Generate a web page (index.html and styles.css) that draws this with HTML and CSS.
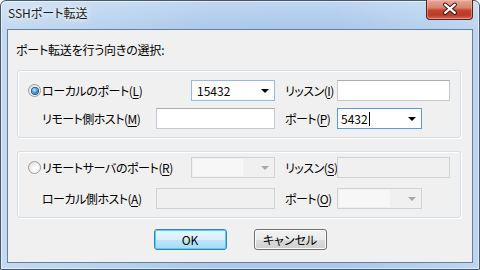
FILE: index.html
```html
<!DOCTYPE html>
<html lang="ja">
<head>
    <meta charset="UTF-8">
    <title>SSHポート転送</title>
    <link rel="stylesheet" href="styles.css">
</head>
<body>
    <div class="window">
        <div class="titlebar">
            <span class="title">SSHポート転送</span>
            <div class="close">
                <svg width="47" height="20" viewBox="0 0 47 20">
                    <path d="M19.5 5.5 L29.5 14 M29.5 5.5 L19.5 14" stroke="#3b1710" stroke-width="4.2" stroke-linecap="round" fill="none"/>
                    <path d="M19.5 5.5 L29.5 14 M29.5 5.5 L19.5 14" stroke="#ffffff" stroke-width="2.2" stroke-linecap="round" fill="none"/>
                </svg>
            </div>
        </div>

        <div class="client">
            <p class="prompt">ポート転送を行う向きの選択:</p>

            <!-- ローカル → リモート -->
            <div class="group group-local">
                <label class="choice">
                    <span class="radio checked"><span class="dot"></span></span>
                    ローカルのポート(<u>L</u>)
                </label>
                <div class="field combo c-combo1"><span class="value">15432</span><span class="arrow"></span></div>
                <span class="lbl c-lbl2">リッスン(<u>I</u>)</span>
                <div class="field edit c-edit2"></div>

                <span class="lbl c-lbl1">リモート側ホスト(<u>M</u>)</span>
                <div class="field edit c-edit1"></div>
                <span class="lbl c-lbl2">ポート(<u>P</u>)</span>
                <div class="field combo focus c-combo2"><span class="value">5432<span class="caret"></span></span><span class="arrow"></span></div>
            </div>

            <!-- リモート → ローカル -->
            <div class="group group-remote">
                <label class="choice">
                    <span class="radio"></span>
                    リモートサーバのポート(<u>R</u>)
                </label>
                <div class="field combo disabled c-combo1"><span class="value"></span><span class="arrow"></span></div>
                <span class="lbl c-lbl2">リッスン(<u>S</u>)</span>
                <div class="field edit disabled c-edit2"></div>

                <span class="lbl c-lbl1">ローカル側ホスト(<u>A</u>)</span>
                <div class="field edit disabled c-edit1"></div>
                <span class="lbl c-lbl2">ポート(<u>O</u>)</span>
                <div class="field combo disabled c-combo2"><span class="value"></span><span class="arrow"></span></div>
            </div>

            <div class="buttons">
                <button class="btn default">OK</button>
                <button class="btn">キャンセル</button>
            </div>
        </div>
    </div>
</body>
</html>
```

FILE: styles.css
```css
/* fenêtre type Windows 7 */
body {
    margin: 0;
    background: #ffffff;
    font-family: "Noto Sans CJK JP", sans-serif;
    font-size: 12px;
    font-feature-settings: "palt";
    color: #000;
}

.window {
    box-sizing: border-box;
    width: 480px;
    height: 270px;
    border: 1px solid #46596e;
    border-radius: 6px 6px 0 0;
    padding: 0 6px 6px;
    display: flex;
    flex-direction: column;
    background:
        linear-gradient(to bottom, rgba(255, 255, 255, 0.25), rgba(255, 255, 255, 0) 28px),
        linear-gradient(to right, #c4daf1, #abc9eb 45%, #a9c8eb 70%, #bdd5f0);
    box-shadow: inset 0 0 0 1px rgba(255, 255, 255, 0.55);
}

.titlebar {
    height: 28px;
    display: flex;
    align-items: flex-start;
}

.title {
    margin: 4px 0 0 1px;
    line-height: 16px;
    color: #1b1b1b;
    text-shadow: 0 0 5px #ffffff, 0 0 8px rgba(255, 255, 255, 0.8);
}

.close {
    margin: -1px 0 0 auto;
    width: 47px;
    height: 20px;
    box-sizing: border-box;
    border: 1px solid #5a2219;
    border-top: none;
    border-radius: 0 0 4px 4px;
    background: linear-gradient(to bottom, #e9a898 0%, #d78470 40%, #c4432e 55%, #b93b26 80%, #d2705c 100%);
    box-shadow: inset 0 0 0 1px rgba(255, 200, 190, 0.45);
    display: flex;
    justify-content: center;
    align-items: center;
}

.close svg {
    display: block;
    margin: -1px 0 0 -1px;
}

/* zone client */
.client {
    flex: 1;
    border: 1px solid #67809e;
    background-color: #f0f0f0;
}

.prompt {
    margin: 12px 0 0 8px;
    line-height: 16px;
    letter-spacing: -0.2px;
}

.group {
    margin: 12px 11px 0 9px;
    border: 1px solid #d5dfe5;
    border-radius: 3px;
    box-shadow: inset 1px 1px 0 #ffffff, 1px 1px 0 #ffffff;
    padding: 9px 0 8px 10px;
    display: grid;
    grid-template-columns: 14px 114px 35px 84px 10px 52px 85px 28px;
    grid-template-rows: 21px 21px;
    row-gap: 7px;
    align-items: center;
}

.group-remote {
    margin-top: 13px;
    padding-top: 5px;
    row-gap: 10px;
}

.choice {
    grid-column: 1 / 4;
    display: flex;
    align-items: center;
    line-height: 16px;
    letter-spacing: -0.4px;
    white-space: nowrap;
}

.lbl {
    line-height: 16px;
    letter-spacing: -0.5px;
    white-space: nowrap;
}

.c-lbl1 { grid-column: 2; }
.c-lbl2 { grid-column: 6; }
.c-combo1 { grid-column: 4; }
.c-combo2 { grid-column: 7; }
.c-edit1 { grid-column: 3 / 5; }
.c-edit2 { grid-column: 7 / 9; }

u {
    text-underline-offset: 2px;
}

/* bouton radio */
.radio {
    box-sizing: border-box;
    width: 13px;
    height: 13px;
    margin-right: 1px;
    border-radius: 50%;
    border: 1px solid #9a9a9a;
    background: radial-gradient(circle at 60% 65%, #ffffff 20%, #e4e4e4 75%, #cfcfcf);
    display: flex;
    justify-content: center;
    align-items: center;
}

.radio .dot {
    width: 6px;
    height: 6px;
    border-radius: 50%;
    background: radial-gradient(circle at 40% 35%, #d8f0ff 0%, #58aef0 35%, #1e64ad 80%);
    box-shadow: 0 0 0 1px #29548a;
}

/* champs */
.field {
    box-sizing: border-box;
    height: 21px;
    border: 1px solid #c6c9d0;
    border-top-color: #abadb3;
    background-color: #ffffff;
    display: flex;
    align-items: center;
}

.combo {
    border-color: #98b9dc;
}

.combo.focus {
    border-color: #5b9bd5;
}

.value {
    flex: 1;
    padding-left: 5px;
    line-height: 16px;
    display: flex;
    align-items: center;
}

.c-combo2 .value {
    padding-left: 3px;
}

.caret {
    display: inline-block;
    width: 1px;
    height: 14px;
    margin-left: 1px;
    background-color: #000;
}

.arrow {
    width: 0;
    height: 0;
    margin-right: 5px;
    border-left: 4px solid transparent;
    border-right: 4px solid transparent;
    border-top: 4px solid #000;
}

.field.disabled {
    border-color: #d1d1d1;
    background-color: #f0f0f0;
}

.combo.disabled .value {
    align-self: stretch;
    margin: 1px 18px 1px 1px;
    background-color: #f7f7f7;
}

.combo.disabled .arrow {
    border-top-color: #a8a8a8;
}

/* boutons */
.buttons {
    margin-top: 11px;
    display: flex;
    justify-content: center;
    gap: 27px;
}

.btn {
    box-sizing: border-box;
    width: 73px;
    height: 21px;
    padding: 0;
    font-family: "Noto Sans CJK JP", sans-serif;
    font-size: 12px;
    font-feature-settings: "palt";
    line-height: 16px;
    color: #000;
    border: 1px solid #707070;
    border-radius: 3px;
    background: linear-gradient(to bottom, #f2f2f2 0%, #ebebeb 50%, #dddddd 51%, #cfcfcf 100%);
    box-shadow: inset 0 0 0 1px #fcfcfc;
}

.btn.default {
    border-color: #3c7fb1;
    background: linear-gradient(to bottom, #eaf6fd 0%, #d9f0fc 50%, #bee6fd 51%, #a7d9f5 100%);
    box-shadow: inset 0 0 0 1px #48d7fb;
}
```
